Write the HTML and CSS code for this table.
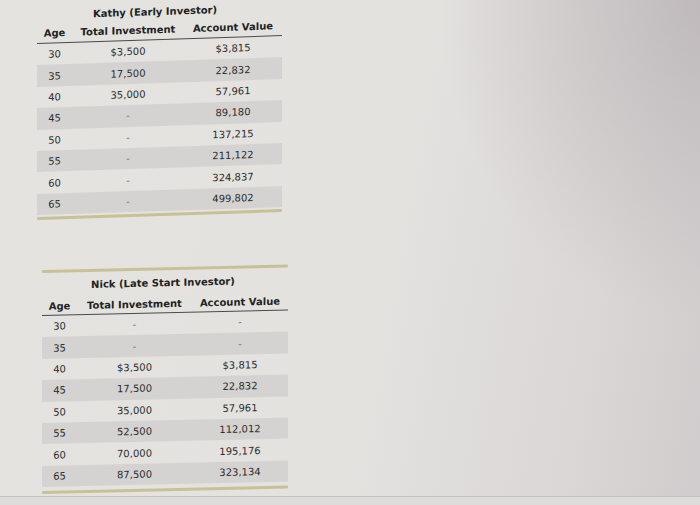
FILE: index.html
```html
<!DOCTYPE html>
<html>
<head>
<meta charset="utf-8">
<link rel="stylesheet" href="styles.css">
</head>
<body>
<div class="page">
  <div class="sheet early">
    <div class="title">Kathy (Early Investor)</div>
    <div class="row head"><span>Age</span><span>Total Investment</span><span>Account Value</span></div>
    <div class="row"><span>30</span><span>$3,500</span><span>$3,815</span></div>
    <div class="row alt"><span>35</span><span>17,500</span><span>22,832</span></div>
    <div class="row"><span>40</span><span>35,000</span><span>57,961</span></div>
    <div class="row alt"><span>45</span><span class="dash">-</span><span>89,180</span></div>
    <div class="row"><span>50</span><span class="dash">-</span><span>137,215</span></div>
    <div class="row alt"><span>55</span><span class="dash">-</span><span>211,122</span></div>
    <div class="row"><span>60</span><span class="dash">-</span><span>324,837</span></div>
    <div class="row alt"><span>65</span><span class="dash">-</span><span>499,802</span></div>
    <div class="rule"></div>
  </div>

  <div class="sheet late">
    <div class="rule"></div>
    <div class="title">Nick (Late Start Investor)</div>
    <div class="row head"><span>Age</span><span>Total Investment</span><span>Account Value</span></div>
    <div class="row"><span>30</span><span class="dash">-</span><span class="dash">-</span></div>
    <div class="row alt"><span>35</span><span class="dash">-</span><span class="dash">-</span></div>
    <div class="row"><span>40</span><span>$3,500</span><span>$3,815</span></div>
    <div class="row alt"><span>45</span><span>17,500</span><span>22,832</span></div>
    <div class="row"><span>50</span><span>35,000</span><span>57,961</span></div>
    <div class="row alt"><span>55</span><span>52,500</span><span>112,012</span></div>
    <div class="row"><span>60</span><span>70,000</span><span>195,176</span></div>
    <div class="row alt"><span>65</span><span>87,500</span><span>323,134</span></div>
    <div class="rule"></div>
  </div>
</div>
<div class="edge"></div>
</body>
</html>
```

FILE: styles.css
```css
html, body {
  margin: 0;
  padding: 0;
}
body {
  width: 700px;
  height: 505px;
  overflow: hidden;
  font-family: "DejaVu Sans", Verdana, sans-serif;
  font-size: 10px;
  color: #2c2c2c;
  background:
    radial-gradient(ellipse 260px 320px at 100% 0%, rgba(176, 168, 172, 0.6), rgba(176, 168, 172, 0) 100%),
    linear-gradient(100deg, #e4e3e0 0%, #e3e2df 55%, #dad7d6 82%, #d0cccd 100%);
}
.page {
  display: flex;
  flex-direction: column;
  align-items: flex-start;
}
.sheet {
  transform-origin: 0 0;
}
.early {
  width: 245px;
  margin-left: 37px;
  transform: skewY(-1.85deg);
}
.late {
  width: 246px;
  margin-left: 42px;
  margin-top: 50px;
  transform: skewY(-1.3deg);
}
.title {
  font-weight: bold;
  color: #222;
  text-align: center;
  line-height: 14px;
}
.early .title {
  padding-top: 9px;
  padding-right: 9px;
}
.late .title {
  padding-top: 6px;
  padding-right: 4px;
}
.row {
  display: grid;
  align-items: center;
}
.early .row {
  grid-template-columns: 35px 112px 98px;
  height: 21.4px;
}
.late .row {
  grid-template-columns: 35px 115px 96px;
  height: 21.4px;
}
.row span {
  text-align: center;
  white-space: nowrap;
}
.row.alt {
  background: #d4d3d1;
}
.row.head {
  font-weight: bold;
  color: #222;
  border-bottom: 1px solid #4a4a4a;
}
.early .row.head {
  height: 20px;
}
.late .row.head {
  height: 18px;
  padding-top: 4px;
}
.dash {
  color: #777;
}
.rule {
  height: 3px;
  background: #c7c296;
  border-radius: 1px;
}
.early .rule {
  margin-top: 2px;
}
.late .rule {
  margin-top: 4px;
}
.late .rule:first-child {
  margin-top: 0;
}
.edge {
  margin-top: 2px;
  height: 12px;
  border-top: 1px solid #c4c2c0;
  background: #dedcda;
}
```
